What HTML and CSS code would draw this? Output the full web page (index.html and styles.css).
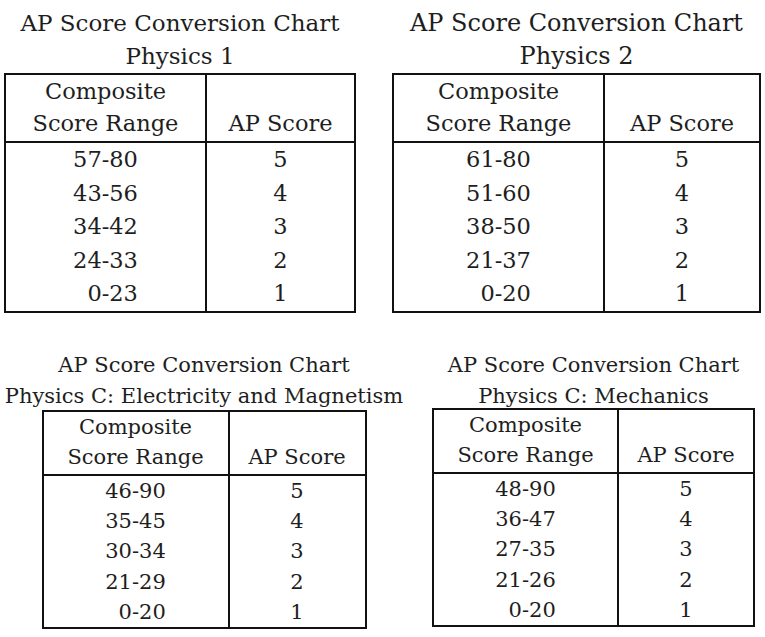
FILE: index.html
```html
<!DOCTYPE html>
<html>
<head>
<meta charset="utf-8">
<link rel="stylesheet" href="styles.css">
</head>
<body>
<div class="page">
  <div class="row row-top">
    <section class="chart chart-p1">
      <h2 class="title">AP Score Conversion Chart<br>Physics 1</h2>
      <table class="score">
        <thead><tr><th class="c1">Composite<br>Score Range</th><th class="c2">AP Score</th></tr></thead>
        <tbody>
          <tr><td class="c1">57-80</td><td class="c2">5</td></tr>
          <tr><td class="c1">43-56</td><td class="c2">4</td></tr>
          <tr><td class="c1">34-42</td><td class="c2">3</td></tr>
          <tr><td class="c1">24-33</td><td class="c2">2</td></tr>
          <tr><td class="c1">&#8199;0-23</td><td class="c2">1</td></tr>
        </tbody>
      </table>
    </section>
    <section class="chart chart-p2">
      <h2 class="title">AP Score Conversion Chart<br>Physics 2</h2>
      <table class="score">
        <thead><tr><th class="c1">Composite<br>Score Range</th><th class="c2">AP Score</th></tr></thead>
        <tbody>
          <tr><td class="c1">61-80</td><td class="c2">5</td></tr>
          <tr><td class="c1">51-60</td><td class="c2">4</td></tr>
          <tr><td class="c1">38-50</td><td class="c2">3</td></tr>
          <tr><td class="c1">21-37</td><td class="c2">2</td></tr>
          <tr><td class="c1">&#8199;0-20</td><td class="c2">1</td></tr>
        </tbody>
      </table>
    </section>
  </div>
  <div class="row row-bottom">
    <section class="chart chart-em">
      <h2 class="title">AP Score Conversion Chart<br>Physics C: Electricity and Magnetism</h2>
      <table class="score">
        <thead><tr><th class="c1">Composite<br>Score Range</th><th class="c2">AP Score</th></tr></thead>
        <tbody>
          <tr><td class="c1">46-90</td><td class="c2">5</td></tr>
          <tr><td class="c1">35-45</td><td class="c2">4</td></tr>
          <tr><td class="c1">30-34</td><td class="c2">3</td></tr>
          <tr><td class="c1">21-29</td><td class="c2">2</td></tr>
          <tr><td class="c1">&#8199;0-20</td><td class="c2">1</td></tr>
        </tbody>
      </table>
    </section>
    <section class="chart chart-m">
      <h2 class="title">AP Score Conversion Chart<br>Physics C: Mechanics</h2>
      <table class="score">
        <thead><tr><th class="c1">Composite<br>Score Range</th><th class="c2">AP Score</th></tr></thead>
        <tbody>
          <tr><td class="c1">48-90</td><td class="c2">5</td></tr>
          <tr><td class="c1">36-47</td><td class="c2">4</td></tr>
          <tr><td class="c1">27-35</td><td class="c2">3</td></tr>
          <tr><td class="c1">21-26</td><td class="c2">2</td></tr>
          <tr><td class="c1">&#8199;0-20</td><td class="c2">1</td></tr>
        </tbody>
      </table>
    </section>
  </div>
</div>
</body>
</html>
```
FILE: styles.css
```css
html, body {
  margin: 0;
  padding: 0;
  background: #fff;
}
body {
  font-family: "DejaVu Serif", "Liberation Serif", serif;
  color: #1e1e1e;
  width: 765px;
  height: 637px;
  overflow: hidden;
}
.page {
  display: flex;
  flex-direction: column;
}
.row {
  display: flex;
  align-items: flex-start;
}
.row-top {
  padding-left: 4px;
  gap: 36px;
}
.row-bottom {
  padding-top: 37px;
  padding-left: 4px;
  gap: 28px;
}
.chart {
  display: flex;
  flex-direction: column;
  align-items: center;
}
.title {
  margin: 0;
  font-weight: normal;
  text-align: center;
  white-space: nowrap;
}
.score {
  border-collapse: collapse;
  border: 2px solid #111;
}
.score th, .score td {
  border-left: 2px solid #111;
  border-right: 2px solid #111;
  padding: 0;
  text-align: center;
  font-weight: normal;
  white-space: nowrap;
}
.score thead th {
  border-bottom: 2px solid #111;
  vertical-align: bottom;
}

/* top charts */
.chart-p1, .chart-p2 { padding-top: 7px; }
.chart-p1 .title, .chart-p2 .title {
  font-size: 23px;
  line-height: 33px;
}
.chart-p2 .title { font-size: 24px; }
.chart-p1 .score th, .chart-p2 .score th {
  font-size: 22.5px;
  line-height: 32px;
  height: 63px;
  padding-bottom: 2px;
}
.chart-p1 .score td, .chart-p2 .score td {
  font-size: 22.5px;
  height: 33.5px;
  line-height: 33px;
}
.chart-p1 .score { width: 352px; }
.chart-p1 .c1 { width: 199px; }
.chart-p2 .score { width: 369px; margin-left: 0; }
.chart-p2 .c1 { width: 209px; }

/* bottom charts */
.chart-em, .chart-m { width: 400px; }
.chart-m { width: 323px; }
.chart-em .title, .chart-m .title {
  font-size: 21px;
  line-height: 31px;
  margin-bottom: -2px;
}
.chart-em .score th, .chart-m .score th {
  font-size: 21px;
  line-height: 30px;
  height: 60px;
  padding-bottom: 2px;
}
.chart-em .score td, .chart-m .score td {
  font-size: 21px;
  height: 30.3px;
  line-height: 30px;
}
.chart-em .score { width: 325px; }
.chart-em .c1 { width: 184px; }
.chart-m .score { width: 323px; margin-top: -2px; }
.chart-m .c1 { width: 183px; }
```
